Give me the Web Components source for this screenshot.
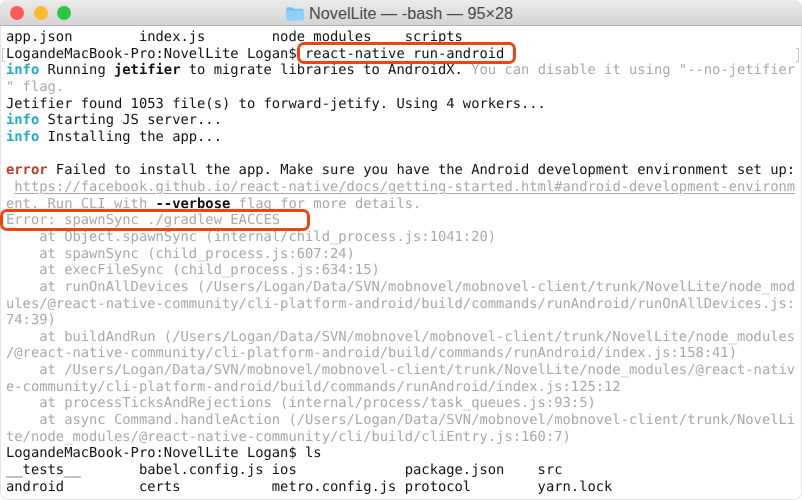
<!DOCTYPE html>
<html>
<head>
<meta charset="utf-8">
<title>NovelLite</title>
<style>
  html, body { margin: 0; background: #fff; }
</style>
</head>
<body>
<term-window>
  <title-bar slot="bar">NovelLite — -bash — 95×28</title-bar>

  <term-line>app.json        index.js        node_modules    scripts</term-line>
  <term-line marks>LogandeMacBook-Pro:NovelLite Logan$ react-native run-android</term-line>
  <term-line><t-run kind="info">info</t-run> Running <t-run kind="bold">jetifier</t-run> to migrate libraries to AndroidX. <t-run kind="dim">You can disable it using "--no-jetifier</t-run></term-line>
  <term-line><t-run kind="dim">" flag.</t-run></term-line>
  <term-line>Jetifier found 1053 file(s) to forward-jetify. Using 4 workers...</term-line>
  <term-line><t-run kind="info">info</t-run> Starting JS server...</term-line>
  <term-line><t-run kind="info">info</t-run> Installing the app...</term-line>
  <term-line></term-line>
  <term-line><t-run kind="error">error</t-run> Failed to install the app. Make sure you have the Android development environment set up:</term-line>
  <term-line> <t-run kind="link">https://facebook.github.io/react-native/docs/getting-started.html#android-development-environm</t-run></term-line>
  <term-line><t-run kind="dim">ent. Run CLI with </t-run><t-run kind="bold">--verbose</t-run><t-run kind="dim"> flag for more details.</t-run></term-line>
  <term-line><t-run kind="dim">Error: spawnSync ./gradlew EACCES</t-run></term-line>
  <term-line><t-run kind="dim">    at Object.spawnSync (internal/child_process.js:1041:20)</t-run></term-line>
  <term-line><t-run kind="dim">    at spawnSync (child_process.js:607:24)</t-run></term-line>
  <term-line><t-run kind="dim">    at execFileSync (child_process.js:634:15)</t-run></term-line>
  <term-line><t-run kind="dim">    at runOnAllDevices (/Users/Logan/Data/SVN/mobnovel/mobnovel-client/trunk/NovelLite/node_mod</t-run></term-line>
  <term-line><t-run kind="dim">ules/@react-native-community/cli-platform-android/build/commands/runAndroid/runOnAllDevices.js:</t-run></term-line>
  <term-line><t-run kind="dim">74:39)</t-run></term-line>
  <term-line><t-run kind="dim">    at buildAndRun (/Users/Logan/Data/SVN/mobnovel/mobnovel-client/trunk/NovelLite/node_modules</t-run></term-line>
  <term-line><t-run kind="dim">/@react-native-community/cli-platform-android/build/commands/runAndroid/index.js:158:41)</t-run></term-line>
  <term-line><t-run kind="dim">    at /Users/Logan/Data/SVN/mobnovel/mobnovel-client/trunk/NovelLite/node_modules/@react-nativ</t-run></term-line>
  <term-line><t-run kind="dim">e-community/cli-platform-android/build/commands/runAndroid/index.js:125:12</t-run></term-line>
  <term-line><t-run kind="dim">    at processTicksAndRejections (internal/process/task_queues.js:93:5)</t-run></term-line>
  <term-line><t-run kind="dim">    at async Command.handleAction (/Users/Logan/Data/SVN/mobnovel/mobnovel-client/trunk/NovelLi</t-run></term-line>
  <term-line><t-run kind="dim">te/node_modules/@react-native-community/cli/build/cliEntry.js:160:7)</t-run></term-line>
  <term-line>LogandeMacBook-Pro:NovelLite Logan$ ls</term-line>
  <term-line>__tests__       babel.config.js ios             package.json    src</term-line>
  <term-line>android         certs           metro.config.js protocol        yarn.lock</term-line>

  <mark-box slot="over" style="left:297px;top:16px;width:219px;height:22px"></mark-box>
  <mark-box slot="over" style="left:0;top:183px;width:310px;height:22px"></mark-box>
</term-window>

<script>
  // window frame: title bar on top, rows of text below it
  class TermWindow extends HTMLElement {
    constructor() {
      super();
      this.attachShadow({ mode: "open" }).innerHTML =
        "<style>" +
        ":host { display: flex; flex-direction: column; width: 802px; height: 500px; overflow: hidden; background: #fff; border-radius: 7px 7px 8px 8px; box-shadow: inset 0 0 0 1px #e4e4e4; filter: blur(0.3px); }" +
        ".body { position: relative; flex: 1; display: grid; grid-auto-rows: 16.667px; align-content: start; padding: 3px 0 0 6px; font: 13.8px 'DejaVu Sans Mono', monospace; color: #111; text-rendering: geometricPrecision; }" +
        "</style>" +
        "<slot name=\"bar\"></slot>" +
        "<div class=\"body\"><slot></slot><slot name=\"over\"></slot></div>";
    }
  }

  class TitleBar extends HTMLElement {
    constructor() {
      super();
      this.attachShadow({ mode: "open" }).innerHTML =
        "<style>" +
        ":host { display: flex; align-items: center; flex: none; height: 26px; position: relative; box-sizing: border-box; padding: 1px 0 0 10px; background: linear-gradient(#ebebeb, #d4d4d4); border-bottom: 1px solid #b4b4b4; border-radius: 7px 7px 0 0; }" +
        ".lights { display: flex; gap: 9.5px; }" +
        ".lights i { width: 14px; height: 14px; border-radius: 50%; }" +
        ".title { flex: 1; display: flex; align-items: center; justify-content: center; gap: 5px; margin-left: -74px; font: 16.2px 'Liberation Sans', sans-serif; color: #4a4a4a; }" +
        "svg { display: block; }" +
        "</style>" +
        "<div class=\"lights\">" +
        "<i style=\"background:#fc5c55\"></i><i style=\"background:#fdbb2c\"></i><i style=\"background:#29c73f\"></i>" +
        "</div>" +
        "<div class=\"title\">" +
        "<svg width=\"18\" height=\"15\" viewBox=\"0 0 19 15\"><path d=\"M0.5 2.5a1.5 1.5 0 0 1 1.5-1.5h4.5l1.5 1.6h9a1.5 1.5 0 0 1 1.5 1.5v9a1.5 1.5 0 0 1-1.5 1.5H2a1.5 1.5 0 0 1-1.5-1.5z\" fill=\"#6fc0f2\"/><path d=\"M0.5 4.4h18v8.7a1.5 1.5 0 0 1-1.5 1.5H2a1.5 1.5 0 0 1-1.5-1.5z\" fill=\"#8ed1f8\"/></svg>" +
        "<span><slot></slot></span>" +
        "</div>";
    }
  }

  class TermLine extends HTMLElement {
    constructor() {
      super();
      this.attachShadow({ mode: "open" }).innerHTML =
        "<style>" +
        ":host { display: block; position: relative; white-space: pre; line-height: 16.667px; }" +
        // the little [ ] marks terminal draws in the margins
        ".mark { display: none; position: absolute; top: 2px; width: 2px; height: 12px; border: 1px solid #c4c4c4; }" +
        ":host([marks]) .mark { display: block; }" +
        ".l { left: -4px; border-right: 0; } .r { left: 790px; border-left: 0; }" +
        "</style>" +
        "<span class=\"mark l\"></span><slot></slot><span class=\"mark r\"></span>";
    }
  }

  class TRun extends HTMLElement {
    constructor() {
      super();
      this.attachShadow({ mode: "open" }).innerHTML =
        "<style>" +
        ":host { display: inline; }" +
        ":host([kind=info]) { color: #22adc6; font-weight: bold; }" +
        ":host([kind=error]) { color: #b8402a; font-weight: bold; }" +
        ":host([kind=bold]) { font-weight: bold; }" +
        ":host([kind=dim]) { color: #a9a9a9; }" +
        ":host([kind=link]) { color: #a9a9a9; text-decoration: underline; text-underline-offset: 1.5px; }" +
        "</style><slot></slot>";
    }
  }

  // red outline drawn over the screenshot, top/left come from the style attribute
  class MarkBox extends HTMLElement {
    constructor() {
      super();
      this.attachShadow({ mode: "open" }).innerHTML =
        "<style>" +
        ":host { display: block; position: absolute; box-sizing: border-box; border: 3px solid #f2430e; border-radius: 7px; }" +
        "</style>";
    }
  }

  customElements.define("term-window", TermWindow);
  customElements.define("title-bar", TitleBar);
  customElements.define("term-line", TermLine);
  customElements.define("t-run", TRun);
  customElements.define("mark-box", MarkBox);
</script>
</body>
</html>
